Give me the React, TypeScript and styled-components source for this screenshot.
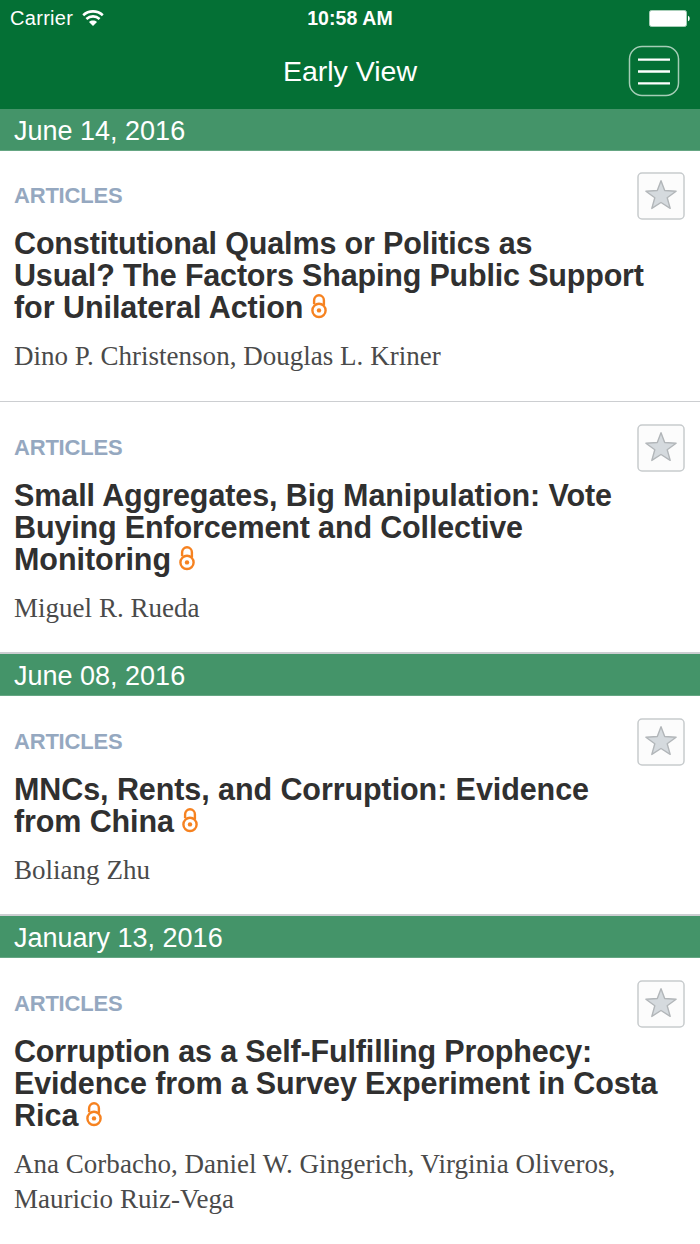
import React from "react";
import styled, { createGlobalStyle } from "styled-components";

const GlobalStyle = createGlobalStyle`
  * { box-sizing: border-box; }
  body {
    margin: 0;
    background: #fff;
    font-family: "Liberation Sans", Arial, sans-serif;
    overflow: hidden;
  }
`;

const Screen = styled.div`
  width: 700px;
  height: 1244px;
  overflow: hidden;
  background: #fff;
`;

const Header = styled.header`
  height: 109px;
  background: #047035;
  color: #fff;
`;

const StatusBar = styled.div`
  height: 36px;
  display: grid;
  grid-template-columns: 1fr auto 1fr;
  align-items: center;
  padding: 0 10px;
  line-height: 36px;
`;

const Carrier = styled.div`
  display: flex;
  align-items: center;
  gap: 9px;
  font-size: 20px;
  letter-spacing: 0.3px;
`;

const Clock = styled.div`
  font-size: 19.5px;
  font-weight: 700;
  letter-spacing: 0.1px;
`;

const BatteryIcon = styled.svg`
  justify-self: end;
  display: block;
`;

const NavBar = styled.div`
  height: 73px;
  display: grid;
  grid-template-columns: 1fr auto 1fr;
  padding: 9px 20px 0;
`;

const NavTitle = styled.h1`
  grid-column: 2;
  margin: 0;
  font-size: 28.5px;
  font-weight: 400;
  line-height: 52px;
`;

const MenuButton = styled.button`
  justify-self: end;
  width: 52px;
  height: 52px;
  padding: 0;
  border: 0;
  background: none;
`;

const DateBar = styled.h2`
  margin: 0;
  height: 42px;
  padding-left: 14px;
  background: #449469;
  border-bottom: 1px solid #65a683;
  color: #fff;
  font-size: 27px;
  font-weight: 400;
  line-height: 44px;
`;

const Article = styled.article<{ $first?: boolean; $divider: number }>`
  padding: ${(p) => (p.$first ? 21 : 22)}px 15px ${(p) => 28 - p.$divider}px 14px;
  border-bottom: ${(p) => p.$divider}px solid #ccced1;
`;

const ArticleTop = styled.div`
  display: flex;
  justify-content: space-between;
  height: 55px;
`;

const Kind = styled.div`
  color: #95a8c0;
  font-size: 22px;
  font-weight: 700;
  line-height: 47px;
  letter-spacing: -0.2px;
`;

const StarButton = styled.button`
  width: 48px;
  height: 48px;
  padding: 0;
  border: 0;
  background: none;
`;

const Title = styled.h3`
  margin: 0;
  color: #303030;
  font-size: 30.5px;
  font-weight: 700;
  line-height: 32px;
`;

const TitleLine = styled.span<{ $spacing: number }>`
  display: block;
  white-space: nowrap;
  letter-spacing: ${(p) => p.$spacing}px;
`;

const LockIcon = styled.svg`
  display: inline-block;
  width: 16px;
  height: 25px;
  margin-left: 8px;
  vertical-align: -1px;
`;

const Authors = styled.p`
  margin: 16px 0 0;
  color: #4a4a4a;
  font-family: "Liberation Serif", "Times New Roman", serif;
  font-size: 27px;
  line-height: 35px;
  letter-spacing: 0.02px;
`;

const Icon = styled.svg`
  display: block;
`;

const Wifi = () => (
  <Icon width="22" height="17" viewBox="0 0 22 17" fill="none" stroke="#fff">
    <path d="M1.2 5.2C6.8.1 15.2.1 20.8 5.2" strokeWidth="2.6" />
    <path d="M4.4 9c3.9-3.5 9.3-3.5 13.2 0" strokeWidth="2.6" />
    <path d="M7 12c2.3-1.9 5.7-1.9 8 0L11 16z" fill="#fff" stroke="none" />
  </Icon>
);

const Battery = () => (
  <BatteryIcon width="41" height="17" viewBox="0 0 41 17">
    <rect x=".5" y=".5" width="37" height="16" rx="2" fill="#fff" stroke="#a9cfb9" />
    <path d="M39 5.8c2.3.9 2.3 4.6 0 5.5z" fill="#fff" />
  </BatteryIcon>
);

const Menu = () => (
  <Icon width="52" height="52" viewBox="0 0 52 52" fill="none">
    <rect x="1.5" y="1.5" width="49" height="49" rx="12.5" stroke="#a5cdb6" strokeWidth="1.5" />
    <path d="M10 14.6h32M10 26.5h32M10 38.4h32" stroke="#fff" strokeWidth="2.3" />
  </Icon>
);

const Star = () => (
  <Icon width="48" height="48" viewBox="0 0 48 48">
    <rect x="1" y="1" width="46" height="46" rx="4" fill="#fcfcfc" stroke="#c7cbcd" strokeWidth="1.5" />
    <path
      d="M24 8.7l3.7 9.8 11.4.7-8.9 6.6 3 10.6L24 30.5l-9.2 5.9 3-10.6-8.9-6.6 11.4-.7z"
      fill="#d5dade"
      stroke="#b2b6b9"
      strokeWidth="1.4"
      strokeLinejoin="round"
    />
  </Icon>
);

const OpenAccess = () => (
  <LockIcon viewBox="0 0 16 25" fill="none" stroke="#f68220" strokeWidth="2.4">
    <circle cx="8" cy="16.4" r="6.6" />
    <circle cx="8" cy="16.4" r="2.2" fill="#f68220" stroke="none" />
    <path d="M3.1 10.2V6.2a4.9 4.9 0 0 1 9.8 0v5.4" />
  </LockIcon>
);

type Line = [string, number];
type Item = { title: Line[]; authors: string[] };
type Group = { date: string; items: Item[] };

const groups: Group[] = [
  {
    date: "June 14, 2016",
    items: [
      {
        title: [
          ["Constitutional Qualms or Politics as", -0.15],
          ["Usual? The Factors Shaping Public Support", -0.18],
          ["for Unilateral Action", -0.05],
        ],
        authors: ["Dino P. Christenson, Douglas L. Kriner"],
      },
      {
        title: [
          ["Small Aggregates, Big Manipulation: Vote", -0.09],
          ["Buying Enforcement and Collective", -0.14],
          ["Monitoring", -0.05],
        ],
        authors: ["Miguel R. Rueda"],
      },
    ],
  },
  {
    date: "June 08, 2016",
    items: [
      {
        title: [
          ["MNCs, Rents, and Corruption: Evidence", -0.08],
          ["from China", -0.12],
        ],
        authors: ["Boliang Zhu"],
      },
    ],
  },
  {
    date: "January 13, 2016",
    items: [
      {
        title: [
          ["Corruption as a Self-Fulfilling Prophecy:", -0.16],
          ["Evidence from a Survey Experiment in Costa", -0.14],
          ["Rica", 0],
        ],
        authors: ["Ana Corbacho, Daniel W. Gingerich, Virginia Oliveros,", "Mauricio Ruiz-Vega"],
      },
    ],
  },
];

const dividerWidth = (g: number, i: number) => {
  if (i < groups[g].items.length - 1) return 1;
  return g < groups.length - 1 ? 2 : 0;
};

export default function App() {
  return (
    <Screen>
      <GlobalStyle />
      <Header>
        <StatusBar>
          <Carrier>
            Carrier
            <Wifi />
          </Carrier>
          <Clock>10:58 AM</Clock>
          <Battery />
        </StatusBar>
        <NavBar>
          <NavTitle>Early View</NavTitle>
          <MenuButton aria-label="Menu">
            <Menu />
          </MenuButton>
        </NavBar>
      </Header>
      {groups.map((group, g) => (
        <section key={group.date}>
          <DateBar>{group.date}</DateBar>
          {group.items.map((item, i) => (
            <Article key={i} $first={g === 0 && i === 0} $divider={dividerWidth(g, i)}>
              <ArticleTop>
                <Kind>ARTICLES</Kind>
                <StarButton aria-label="Add to favorites">
                  <Star />
                </StarButton>
              </ArticleTop>
              <Title>
                {item.title.map(([text, spacing], n) => (
                  <TitleLine key={n} $spacing={spacing}>
                    {text}
                    {n === item.title.length - 1 && <OpenAccess />}
                  </TitleLine>
                ))}
              </Title>
              <Authors>
                {item.authors.map((line) => (
                  <React.Fragment key={line}>
                    {line}
                    <br />
                  </React.Fragment>
                ))}
              </Authors>
            </Article>
          ))}
        </section>
      ))}
    </Screen>
  );
}
